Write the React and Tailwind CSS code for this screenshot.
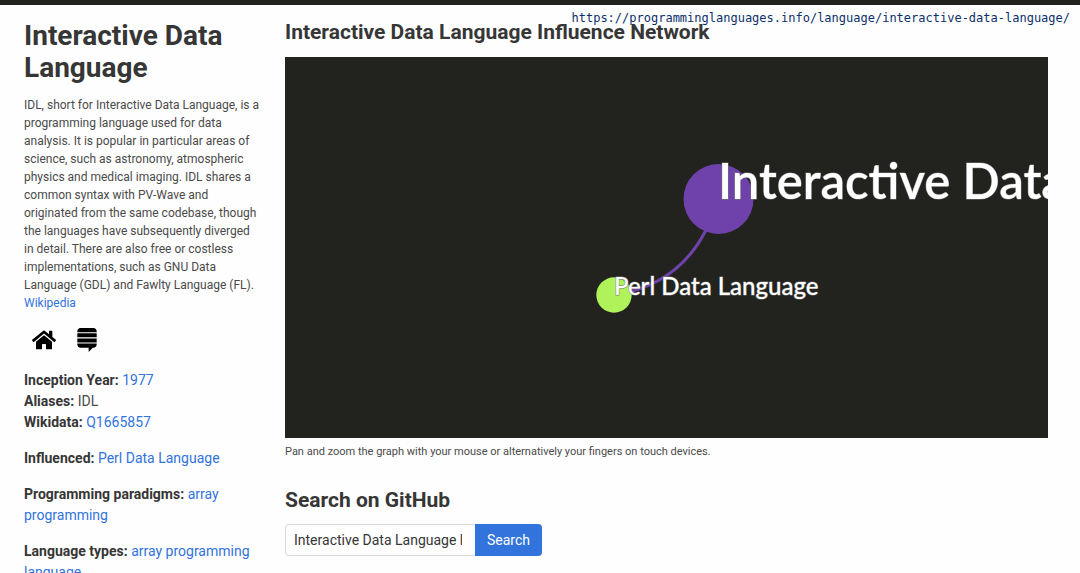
import { FaHome, FaStackExchange } from "react-icons/fa";

const link = "text-[#3273dc]";

function Fact({ label, children }) {
  return (
    <div>
      <strong className="font-bold text-[#363636]">{label}:</strong> {children}
    </div>
  );
}

function Sidebar() {
  return (
    <aside className="w-60 shrink-0">
      <h1 className="text-[28px] leading-8 font-bold text-[#363636]">
        Interactive Data Language
      </h1>
      <p className="mt-3 pr-1 text-[12px] leading-[18px]">
        IDL, short for Interactive Data Language, is a programming language used
        for data analysis. It is popular in particular areas of science, such as
        astronomy, atmospheric physics and medical imaging. IDL shares a common
        syntax with PV-Wave and originated from the same codebase, though the
        languages have subsequently diverged in detail. There are also free or
        costless implementations, such as GNU Data Language (GDL) and Fawlty
        Language (FL).{" "}
        <a href="#wikipedia" className={link}>
          Wikipedia
        </a>
      </p>
      <div className="mt-4 flex items-center gap-[19px] px-2 text-2xl text-black">
        <a href="#home" aria-label="Homepage">
          <FaHome />
        </a>
        <a href="#stack-exchange" aria-label="Stack Exchange">
          <FaStackExchange />
        </a>
      </div>
      <div className="mt-[18px] flex flex-col gap-[15px] text-[14px] leading-[21px]">
        <div>
          <Fact label="Inception Year">
            <a href="#1977" className={link}>1977</a>
          </Fact>
          <Fact label="Aliases">IDL</Fact>
          <Fact label="Wikidata">
            <a href="#wikidata" className={link}>Q1665857</a>
          </Fact>
        </div>
        <Fact label="Influenced">
          <a href="#perl-data-language" className={link}>Perl Data Language</a>
        </Fact>
        <Fact label="Programming paradigms">
          <a href="#array-programming" className={link}>array programming</a>
        </Fact>
        <Fact label="Language types">
          <a href="#array-programming-language" className={link}>
            array programming language
          </a>
        </Fact>
      </div>
    </aside>
  );
}

function Network() {
  return (
    <svg
      viewBox="0 0 763 381"
      className="mt-[13px] block w-full bg-[#22231f]"
      role="img"
      aria-label="Influence network"
    >
      <path
        d="M433 142 Q409 226 329 238"
        fill="none"
        stroke="#6f42ab"
        strokeWidth="3"
      />
      <circle cx="433.5" cy="142" r="35" fill="#6f42ab" />
      <circle cx="329" cy="238" r="17.7" fill="#b0f25a" />
      <g
        fill="#fff"
        stroke="#777"
        strokeWidth="1"
        paintOrder="stroke"
        className="font-[Lato,sans-serif]"
      >
        <text x="433" y="142" fontSize="49" className="font-semibold">
          Interactive Data Language
        </text>
        <text x="329" y="238" fontSize="24" className="font-medium">
          Perl Data Language
        </text>
      </g>
    </svg>
  );
}

export default function App() {
  return (
    <div className="h-screen overflow-hidden bg-[#fefefe] font-[Roboto,sans-serif] text-[#4a4a4a]">
      <header className="h-[5px] bg-[#22231f]" />
      <p className="absolute top-[10px] right-[10px] font-['DejaVu_Sans_Mono',monospace] text-[12px] leading-4 text-[#0b2f6b]">
        https://programminglanguages.info/language/interactive-data-language/
      </p>
      <div className="flex gap-[21px] pt-[15px] pr-8 pl-6">
        <Sidebar />
        <main className="min-w-0 flex-1">
          <h2 className="text-[21px] leading-6 font-bold text-[#363636]">
            Interactive Data Language Influence Network
          </h2>
          <Network />
          <p className="mt-[5px] text-[11px] leading-[18px]">
            Pan and zoom the graph with your mouse or alternatively your fingers
            on touch devices.
          </p>
          <h2 className="mt-[27px] text-[21px] leading-6 font-bold text-[#363636]">
            Search on GitHub
          </h2>
          <form className="mt-3 flex" onSubmit={(e) => e.preventDefault()}>
            <input
              type="text"
              aria-label="Search on GitHub"
              defaultValue="Interactive Data Language language"
              className="h-8 w-[190px] rounded-l border border-r-0 border-[#dbdbdb] bg-white pr-[13px] pl-2 text-[14px] text-[#363636]"
            />
            <button
              type="submit"
              className="h-8 rounded-r bg-[#3273dc] px-3 text-[14px] text-white"
            >
              Search
            </button>
          </form>
        </main>
      </div>
    </div>
  );
}
